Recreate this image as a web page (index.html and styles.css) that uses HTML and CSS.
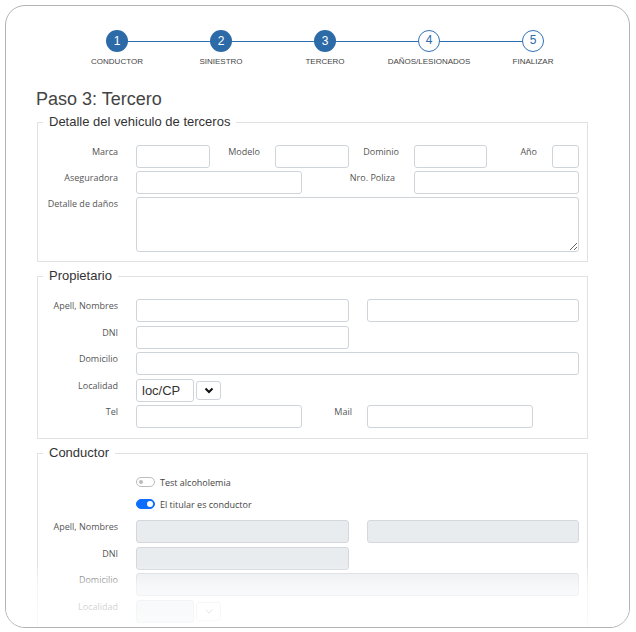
FILE: index.html
```html
<!DOCTYPE html>
<html>
<head>
    <title>Paso 3: Tercero</title>
    <link rel="stylesheet" href="styles.css">
</head>
<body>
    <div class="frame">
        <div class="page">
            <ol class="steps">
                <li class="step"><span class="dot">1</span><span class="step-name">Conductor</span></li>
                <li class="step"><span class="dot">2</span><span class="step-name">Siniestro</span></li>
                <li class="step"><span class="dot">3</span><span class="step-name">Tercero</span></li>
                <li class="step todo"><span class="dot">4</span><span class="step-name">Daños/Lesionados</span></li>
                <li class="step todo"><span class="dot">5</span><span class="step-name">Finalizar</span></li>
            </ol>

            <h2 class="title">Paso 3: Tercero</h2>

            <fieldset class="box box-vehicle">
                <legend>Detalle del vehiculo de terceros</legend>
                <div class="row">
                    <label class="lbl">Marca</label>
                    <input class="in w74">
                    <label class="lbl mid">Modelo</label>
                    <input class="in w74">
                    <label class="lbl mid">Dominio</label>
                    <input class="in w73">
                    <label class="lbl mid">Año</label>
                    <input class="in w27">
                </div>
                <div class="row">
                    <label class="lbl">Aseguradora</label>
                    <input class="in w166">
                    <label class="lbl wide">Nro. Poliza</label>
                    <input class="in w165">
                </div>
                <div class="row">
                    <label class="lbl">Detalle de daños</label>
                    <textarea class="in area w443"></textarea>
                </div>
            </fieldset>

            <fieldset class="box">
                <legend>Propietario</legend>
                <div class="row">
                    <label class="lbl">Apell, Nombres</label>
                    <input class="in w213">
                    <input class="in w212 push">
                </div>
                <div class="row">
                    <label class="lbl">DNI</label>
                    <input class="in w213">
                </div>
                <div class="row">
                    <label class="lbl">Domicilio</label>
                    <input class="in w443">
                </div>
                <div class="row">
                    <label class="lbl">Localidad</label>
                    <input class="in w58" value="loc/CP">
                    <span class="pick">
                        <svg width="10" height="7" viewBox="0 0 10 7"><path d="M1.5 1.5l3.5 3.5 3.5-3.5" fill="none" stroke="#111" stroke-width="2"/></svg>
                    </span>
                </div>
                <div class="row">
                    <label class="lbl">Tel</label>
                    <input class="in w166">
                    <label class="lbl mid">Mail</label>
                    <input class="in w166">
                </div>
            </fieldset>

            <fieldset class="box box-driver">
                <legend>Conductor</legend>
                <div class="switch-row">
                    <span class="switch"></span>
                    <span>Test alcoholemia</span>
                </div>
                <div class="switch-row">
                    <span class="switch on"></span>
                    <span>El titular es conductor</span>
                </div>
                <div class="row">
                    <label class="lbl">Apell, Nombres</label>
                    <input class="in w213" disabled>
                    <input class="in w212 push" disabled>
                </div>
                <div class="row">
                    <label class="lbl">DNI</label>
                    <input class="in w213" disabled>
                </div>
                <div class="row">
                    <label class="lbl">Domicilio</label>
                    <input class="in w443" disabled>
                </div>
                <div class="row">
                    <label class="lbl">Localidad</label>
                    <input class="in w58" disabled>
                    <span class="pick off">
                        <svg width="10" height="7" viewBox="0 0 10 7"><path d="M1.5 1.5l3.5 3.5 3.5-3.5" fill="none" stroke="#999" stroke-width="1"/></svg>
                    </span>
                </div>
            </fieldset>
        </div>
        <div class="fade"></div>
    </div>
</body>
</html>
```

FILE: styles.css
```css
* {
    box-sizing: border-box;
}
body {
    margin: 0;
    background: #fff;
    font-family: "Open Sans", Arial, sans-serif;
}
.frame {
    position: relative;
    width: 625px;
    height: 623px;
    margin: 5px 0 0 5px;
    border: 1px solid #b3b3b3;
    border-radius: 20px;
    overflow: hidden;
    background: #fff;
}
.page {
    padding: 24px 41px 0 31px;
}

/* stepper */
.steps {
    display: flex;
    list-style: none;
    margin: 0 0 0 28px;
    padding: 0;
}
.step {
    position: relative;
    width: 104px;
    display: flex;
    flex-direction: column;
    align-items: center;
}
.step + .step::before {
    content: "";
    position: absolute;
    top: 11px;
    left: -52px;
    width: 104px;
    height: 1px;
    background: #3070b2;
}
.dot {
    position: relative;
    z-index: 1;
    width: 22px;
    height: 22px;
    border-radius: 50%;
    background: #2c6aa8;
    color: #fff;
    font: 12px/22px "Liberation Sans", Arial, sans-serif;
    text-align: center;
}
.step.todo .dot {
    background: #fff;
    color: #2c6aa8;
    border: 1.5px solid #3272b5;
    line-height: 19px;
}
.step-name {
    margin-top: 5px;
    font: 8px/10px "Liberation Sans", Arial, sans-serif;
    text-transform: uppercase;
    color: #444;
    white-space: nowrap;
}

.title {
    margin: 21px 0 4px -1px;
    font: 18px/22px "Liberation Sans", Arial, sans-serif;
    font-weight: normal;
    color: #444;
}

/* fieldsets */
.box {
    width: 551px;
    margin: 0 0 6px;
    padding: 15px 0 10px 2px;
    border: 1px solid #e2e2e2;
}
.box legend {
    margin-left: 3px;
    padding: 0 6px;
    font: 13px/16px "Liberation Sans", Arial, sans-serif;
    color: #333;
}
.box-vehicle {
    padding-bottom: 9px;
}
.box-driver {
    padding-top: 13px;
}

.row {
    display: flex;
    align-items: flex-start;
    margin-bottom: 3.5px;
}
.box-vehicle .row {
    margin-bottom: 3px;
}
.box .row:last-child {
    margin-bottom: 0;
}
.lbl {
    flex: none;
    width: 96px;
    padding: 1px 18px 0 0;
    text-align: right;
    font-size: 9px;
    line-height: 12px;
    color: #555;
}
.lbl.mid {
    width: 65px;
    padding-right: 15px;
}
.lbl.wide {
    width: 112px;
    padding-right: 19px;
}

.in {
    flex: none;
    height: 23px;
    margin: 0;
    padding: 0 5px;
    border: 1px solid #cfd4da;
    border-radius: 3px;
    background: #fff;
    font: 13px "Liberation Sans", Arial, sans-serif;
    color: #333;
    outline: none;
}
.in:disabled {
    background: #e9ecef;
    border-color: #d4d8dd;
}
.in.area {
    height: 55px;
    resize: vertical;
}
.push {
    margin-left: 18px;
}
.w27 { width: 27px; }
.w58 { width: 58px; }
.w73 { width: 73px; }
.w74 { width: 74px; }
.w165 { width: 165px; }
.w166 { width: 166px; }
.w212 { width: 212px; }
.w213 { width: 213px; }
.w443 { width: 443px; }

.pick {
    width: 25px;
    height: 19px;
    margin: 2px 0 0 2px;
    border: 1px solid #cfd4da;
    border-radius: 3px;
    display: flex;
    align-items: center;
    justify-content: center;
}
.pick.off {
    border-color: #dcdfe3;
}

/* switches */
.switch-row {
    display: flex;
    align-items: center;
    height: 16px;
    margin: 0 0 6px 96px;
    font-size: 9px;
    color: #444;
}
.switch-row + .row {
    margin-top: 8px;
}
.switch {
    position: relative;
    width: 19px;
    height: 10px;
    margin-right: 5px;
    border: 1px solid #bbb;
    border-radius: 5px;
    background: #fff;
}
.switch::after {
    content: "";
    position: absolute;
    top: 2px;
    left: 2px;
    width: 4px;
    height: 4px;
    border-radius: 50%;
    background: #bbb;
}
.switch.on {
    background: #0d6efd;
    border-color: #0d6efd;
}
.switch.on::after {
    left: auto;
    right: 1px;
    top: 1px;
    width: 6px;
    height: 6px;
    background: #fff;
}

.fade {
    position: absolute;
    left: 0;
    right: 0;
    bottom: 0;
    height: 62px;
    background: linear-gradient(to bottom, rgba(255,255,255,0) 0%, rgba(255,255,255,.65) 35%, rgba(255,255,255,.82) 100%);
    pointer-events: none;
}
```
